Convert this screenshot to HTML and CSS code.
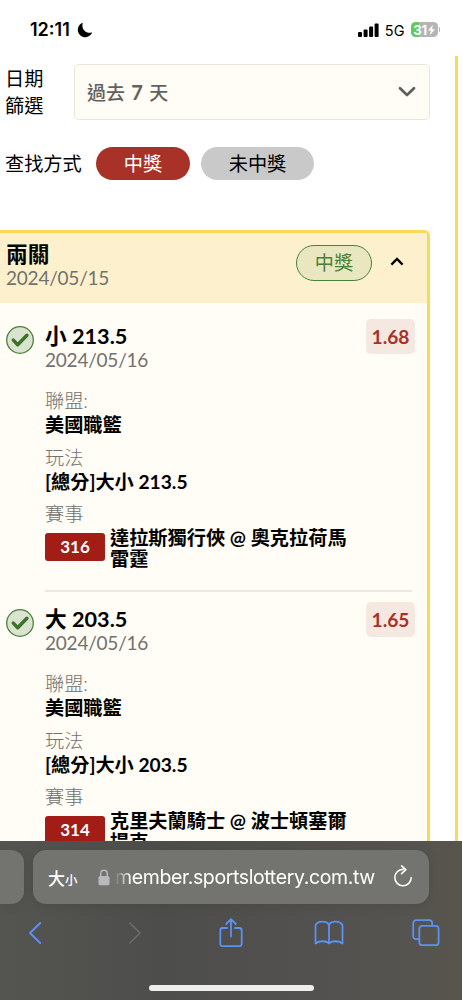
FILE: index.html
```html
<!DOCTYPE html>
<html lang="zh-Hant">
<head>
<meta charset="utf-8">
<title>投注紀錄</title>
<link rel="stylesheet" href="styles.css">
</head>
<body>
<div class="phone">
  <header class="status">
    <div class="status-left">
      <span class="clock">12:11</span>
      <svg class="moon" width="16" height="16" viewBox="0 0 16 16"><path d="M5.800 .8A7.400 7.400 0 1 0 15.200 10.200C10 12.500 3.700 7.500 5.800 .8Z" fill="#000"/></svg>
    </div>
    <div class="status-right">
      <svg width="21" height="14" viewBox="0 0 21 14"><rect x="0" y="9" width="4" height="5" rx="1"/><rect x="5.600" y="6.500" width="4" height="7.500" rx="1"/><rect x="11.100" y="3.500" width="4" height="10.500" rx="1"/><rect x="16.600" y="0.500" width="4" height="13.500" rx="1"/></svg>
      <span class="net">5G</span>
      <span class="battery"><span class="battery-num">31</span><svg width="7" height="10" viewBox="0 0 7 10"><path d="M4.800 0 0 5.600h2.800L2 10l5-5.800H4.100Z" fill="#fff"/></svg></span>
      <span class="battery-cap"></span>
    </div>
  </header>

  <main class="page">
    <div class="column">
      <div class="filter">
        <div class="filter-label">日期<br>篩選</div>
        <div class="select"><span>過去 <b>7</b> 天</span>
          <svg width="18" height="12" viewBox="0 0 18 12"><path d="M2 2.300 9 9l7-6.700" fill="none" stroke="#5f5e5a" stroke-width="2.700" stroke-linecap="round" stroke-linejoin="round"/></svg>
        </div>
      </div>
      <div class="modes">
        <span class="modes-label">查找方式</span>
        <span class="pill pill-on">中獎</span>
        <span class="pill pill-off">未中獎</span>
      </div>

      <section class="card">
        <div class="card-head">
          <div class="card-title"><h2>兩關</h2><p class="date">2024/05/15</p></div>
          <span class="won">中獎</span>
          <svg class="caret" width="14" height="9" viewBox="0 0 14 9"><path d="M1.400 7.600 7 2l5.600 5.600" fill="none" stroke="#000" stroke-width="2.300"/></svg>
        </div>
        <div class="bets">
          <article class="bet">
            <svg class="check" width="28" height="28" viewBox="0 0 28 28"><circle cx="14" cy="14" r="13.300" fill="#d9e3cf" stroke="#4b8136" stroke-width="1.300"/><path d="m7.300 14.100 4.400 4.600 9.200-9.400" fill="none" stroke="#3d7327" stroke-width="3.500" stroke-linecap="round" stroke-linejoin="round"/></svg>
            <div class="bet-body">
              <h3>小 213.5</h3>
              <p class="date">2024/05/16</p>
              <dl>
                <dt>聯盟:</dt><dd>美國職籃</dd>
                <dt>玩法</dt><dd>[總分]大小 213.5</dd>
                <dt>賽事</dt><dd class="match"><span class="tag">316</span><span class="teams">達拉斯獨行俠 @ 奧克拉荷馬雷霆</span></dd>
              </dl>
            </div>
            <span class="odds">1.68</span>
          </article>
          <article class="bet">
            <svg class="check" width="28" height="28" viewBox="0 0 28 28"><circle cx="14" cy="14" r="13.300" fill="#d9e3cf" stroke="#4b8136" stroke-width="1.300"/><path d="m7.300 14.100 4.400 4.600 9.200-9.400" fill="none" stroke="#3d7327" stroke-width="3.500" stroke-linecap="round" stroke-linejoin="round"/></svg>
            <div class="bet-body">
              <h3>大 203.5</h3>
              <p class="date">2024/05/16</p>
              <dl>
                <dt>聯盟:</dt><dd>美國職籃</dd>
                <dt>玩法</dt><dd>[總分]大小 203.5</dd>
                <dt>賽事</dt><dd class="match"><span class="tag">314</span><span class="teams">克里夫蘭騎士 @ 波士頓塞爾提克</span></dd>
              </dl>
            </div>
            <span class="odds">1.65</span>
          </article>
        </div>
      </section>
    </div>
    <div class="rail"></div>
  </main>

  <footer class="browser">
    <div class="tabs">
      <div class="prev-tab"></div>
      <div class="url">
        <span class="aa">大<small>小</small></span>
        <svg class="lock" width="12" height="17" viewBox="0 0 12 17"><path d="M2.700 8V4.600a3.300 3.300 0 0 1 6.600 0V8" fill="none" stroke="#b9b8bd" stroke-width="1.500"/><rect x=".5" y="7" width="11" height="9.300" rx="1.600" fill="#b9b8bd"/></svg>
        <span class="host">member.sportslottery.com.tw</span>
        <svg class="reload" width="20" height="23" viewBox="0 0 20 23"><path d="M10 4.400a8.200 8.200 0 1 0 8.200 8.200M8.600.9l4.200 3.800-4.200 4" fill="none" stroke="#fff" stroke-width="1.600" stroke-linecap="round" stroke-linejoin="round"/></svg>
      </div>
    </div>
    <nav class="tools">
      <svg class="back" width="14" height="24" viewBox="0 0 14 24"><path d="M12.200 2 2 12l10.200 10" stroke-width="2"/></svg>
      <svg class="off" width="14" height="24" viewBox="0 0 14 24"><path d="M1.800 2 12 12 1.800 22" stroke-width="1.700"/></svg>
      <svg width="26" height="32" viewBox="0 0 26 32"><path d="M9 11H4.700a2.400 2.400 0 0 0-2.400 2.400v13.400a2.400 2.400 0 0 0 2.400 2.400h16.600a2.400 2.400 0 0 0 2.400-2.400V13.400a2.400 2.400 0 0 0-2.400-2.400H17M13 19.500V2.300M8.200 7l4.800-4.800L17.800 7"/></svg>
      <svg width="30" height="26" viewBox="0 0 30 26"><path d="M15 4.500v19C12.500 20.500 5 20.500 1.500 23.500V5C4 .8 12.200.6 15 4.500 17.800.6 26 .8 28.500 5v18.500C25 20.500 17.500 20.500 15 23.500"/></svg>
      <svg class="windows" width="28" height="28" viewBox="0 0 28 28"><path d="M7.300 20.200H4.200a3 3 0 0 1-3-3V4.200a3 3 0 0 1 3-3h13a3 3 0 0 1 3 3v2.600"/><rect x="7.300" y="6.900" width="19.300" height="19.300" rx="3"/></svg>
    </nav>
    <div class="home"></div>
  </footer>
</div>
</body>
</html>
```
FILE: styles.css
```css
* { box-sizing: border-box; margin: 0; padding: 0; }
body { background: #fff; color: #000; font-family: Lato, "Noto Sans CJK TC", sans-serif; }
svg { display: block; flex: none; }
.phone { width: 462px; height: 1000px; overflow: hidden; display: flex; flex-direction: column; }

.status { height: 56px; flex: none; display: flex; justify-content: space-between; padding: 0 22px 0 30px; font-family: Inter, "Liberation Sans", sans-serif; }
.status-left { display: flex; height: 59px; align-items: center; gap: 8px; }
.clock { font-size: 18px; font-weight: 600; width: 39px; }
.status-right { display: flex; height: 59px; align-items: center; }
.net { font-size: 14.500px; font-weight: 400; margin: 1px 6px 0 6px; }
.battery { width: 27px; height: 15px; border-radius: 4.500px; background: linear-gradient(90deg, #62c95e 8px, #b5b5b5 8px); color: #fff; display: flex; align-items: center; justify-content: center; gap: 1px; }
.battery-num { font-size: 13px; font-weight: 700; letter-spacing: -0.300px; }
.battery-cap { width: 1.500px; height: 5px; background: #b5b5b5; margin-left: 1px; border-radius: 0 2px 2px 0; }

.page { height: 785px; flex: none; overflow: hidden; display: flex; }
.column { width: 430px; flex: none; padding-top: 8px; }
.rail { width: 3px; height: 100%; margin-left: 25px; background: #fbd958; }

.filter { display: flex; height: 56px; padding-left: 5px; }
.filter-label { width: 69px; font-size: 19.200px; line-height: 27px; padding-top: 1px; }
.select { flex: 1; display: flex; align-items: center; justify-content: space-between; padding: 0 13px 0 12px; border: 1.500px solid #ebe5dc; border-radius: 5px; background: #fffdf6; color: #62615d; font-size: 19px; font-weight: 500; word-spacing: 1.500px; }
.select span { margin-top: -2px; }
.select b { font-size: 20px; font-weight: 700; }
.modes { display: flex; align-items: center; height: 33px; margin-top: 27px; padding-left: 5px; font-size: 19.200px; }
.modes-label { width: 91px; margin-top: -2px; }
.pill { height: 33px; line-height: 33px; border-radius: 17px; text-align: center; }
.pill-on { width: 94px; background: #a83227; color: #fff; }
.pill-off { width: 113px; margin-left: 11px; background: #c9c9c9; }

.card { margin: 50px 0 0 -6px; border: 3px solid #fbd958; border-radius: 6px; background: #fffdf6; height: 640px; }
.card-head { display: flex; align-items: center; height: 70px; padding: 0 23px 0 9px; background: #fcf1cc; }
.card-title { flex: 1; margin-top: -5px; }
h2, h3 { font-size: 21.700px; line-height: 24px; font-weight: 700; }
h3 { margin-top: -1px; }
.date { font-size: 19px; line-height: 23px; letter-spacing: -0.220px; color: #72716d; }
.won { width: 76px; height: 36px; margin: -10px 18px 0 0; border: 1.500px solid #4b8136; border-radius: 18px; background: #e8e7c0; color: #4b8136; text-align: center; font-size: 19.200px; line-height: 34px; }
.caret { margin-top: -13px; }

.bets { padding: 6px 12px 0 9px; }
.bet { display: flex; position: relative; height: 283px; padding-top: 16px; }
.check { margin-top: 1px; }
.bet-body { width: 367px; margin-left: 11px; flex: none; border-bottom: 2px solid #ebe8e2; }
.odds { position: absolute; right: 0; top: 10px; width: 49px; height: 35px; border-radius: 5px; background: #f5e8e1; color: #a83227; font-size: 19.200px; font-weight: 700; line-height: 35px; text-align: center; }
dl { margin-top: 18px; font-size: 19.200px; }
dt { line-height: 24px; color: #72716d; font-weight: 300; }
dd { line-height: 24px; font-weight: 700; margin-bottom: 8.500px; }
.match { display: flex; gap: 5px; line-height: 21px; padding-top: 1px; }
.tag { width: 60px; height: 28px; flex: none; margin-top: 6px; border-radius: 3px; background: #a11d16; color: #fff; font-size: 17px; line-height: 28px; text-align: center; }
.teams { width: 245px; }

.browser { height: 159px; flex: none; display: flex; flex-direction: column; background: linear-gradient(90deg, #545450 0%, #4d4d4b 35%, #545350 85%, #57554c 100%); }
.tabs { display: flex; height: 63px; padding-top: 9px; gap: 9px; }
.prev-tab, .url { height: 54px; background: #737370; box-shadow: 0 2px 12px rgba(0,0,0,.09); }
.prev-tab { width: 24px; border-radius: 0 13px 13px 0; }
.url { width: 396px; border-radius: 13px; display: flex; align-items: center; padding: 0 16px 0 15px; color: #fff; }
.aa { width: 50px; font: 500 17px "Noto Sans CJK TC", sans-serif; white-space: nowrap; }
.aa small { font-size: 12.500px; }
.host { margin-left: 5px; width: 265px; font: 19.500px Inter, "Liberation Sans", sans-serif; letter-spacing: -0.380px; white-space: nowrap; -webkit-mask-image: linear-gradient(90deg, transparent 0, #000 16px); mask-image: linear-gradient(90deg, transparent 0, #000 16px); }
.reload { margin-left: auto; margin-top: -2px; }
.tools { display: grid; grid-template-columns: 84px 98px 98px 98px 84px; justify-items: center; align-items: center; height: 58px; fill: none; stroke: #5c91f4; stroke-width: 1.800; stroke-linecap: round; stroke-linejoin: round; }
.tools .off { stroke: #6b6b69; margin-left: 4px; }
.tools .back { margin-right: 15px; }
.tools .windows { margin-left: 12px; }
.home { width: 165px; height: 6px; margin: 23px 0 0 149px; border-radius: 3px; background: #eee; }
```
